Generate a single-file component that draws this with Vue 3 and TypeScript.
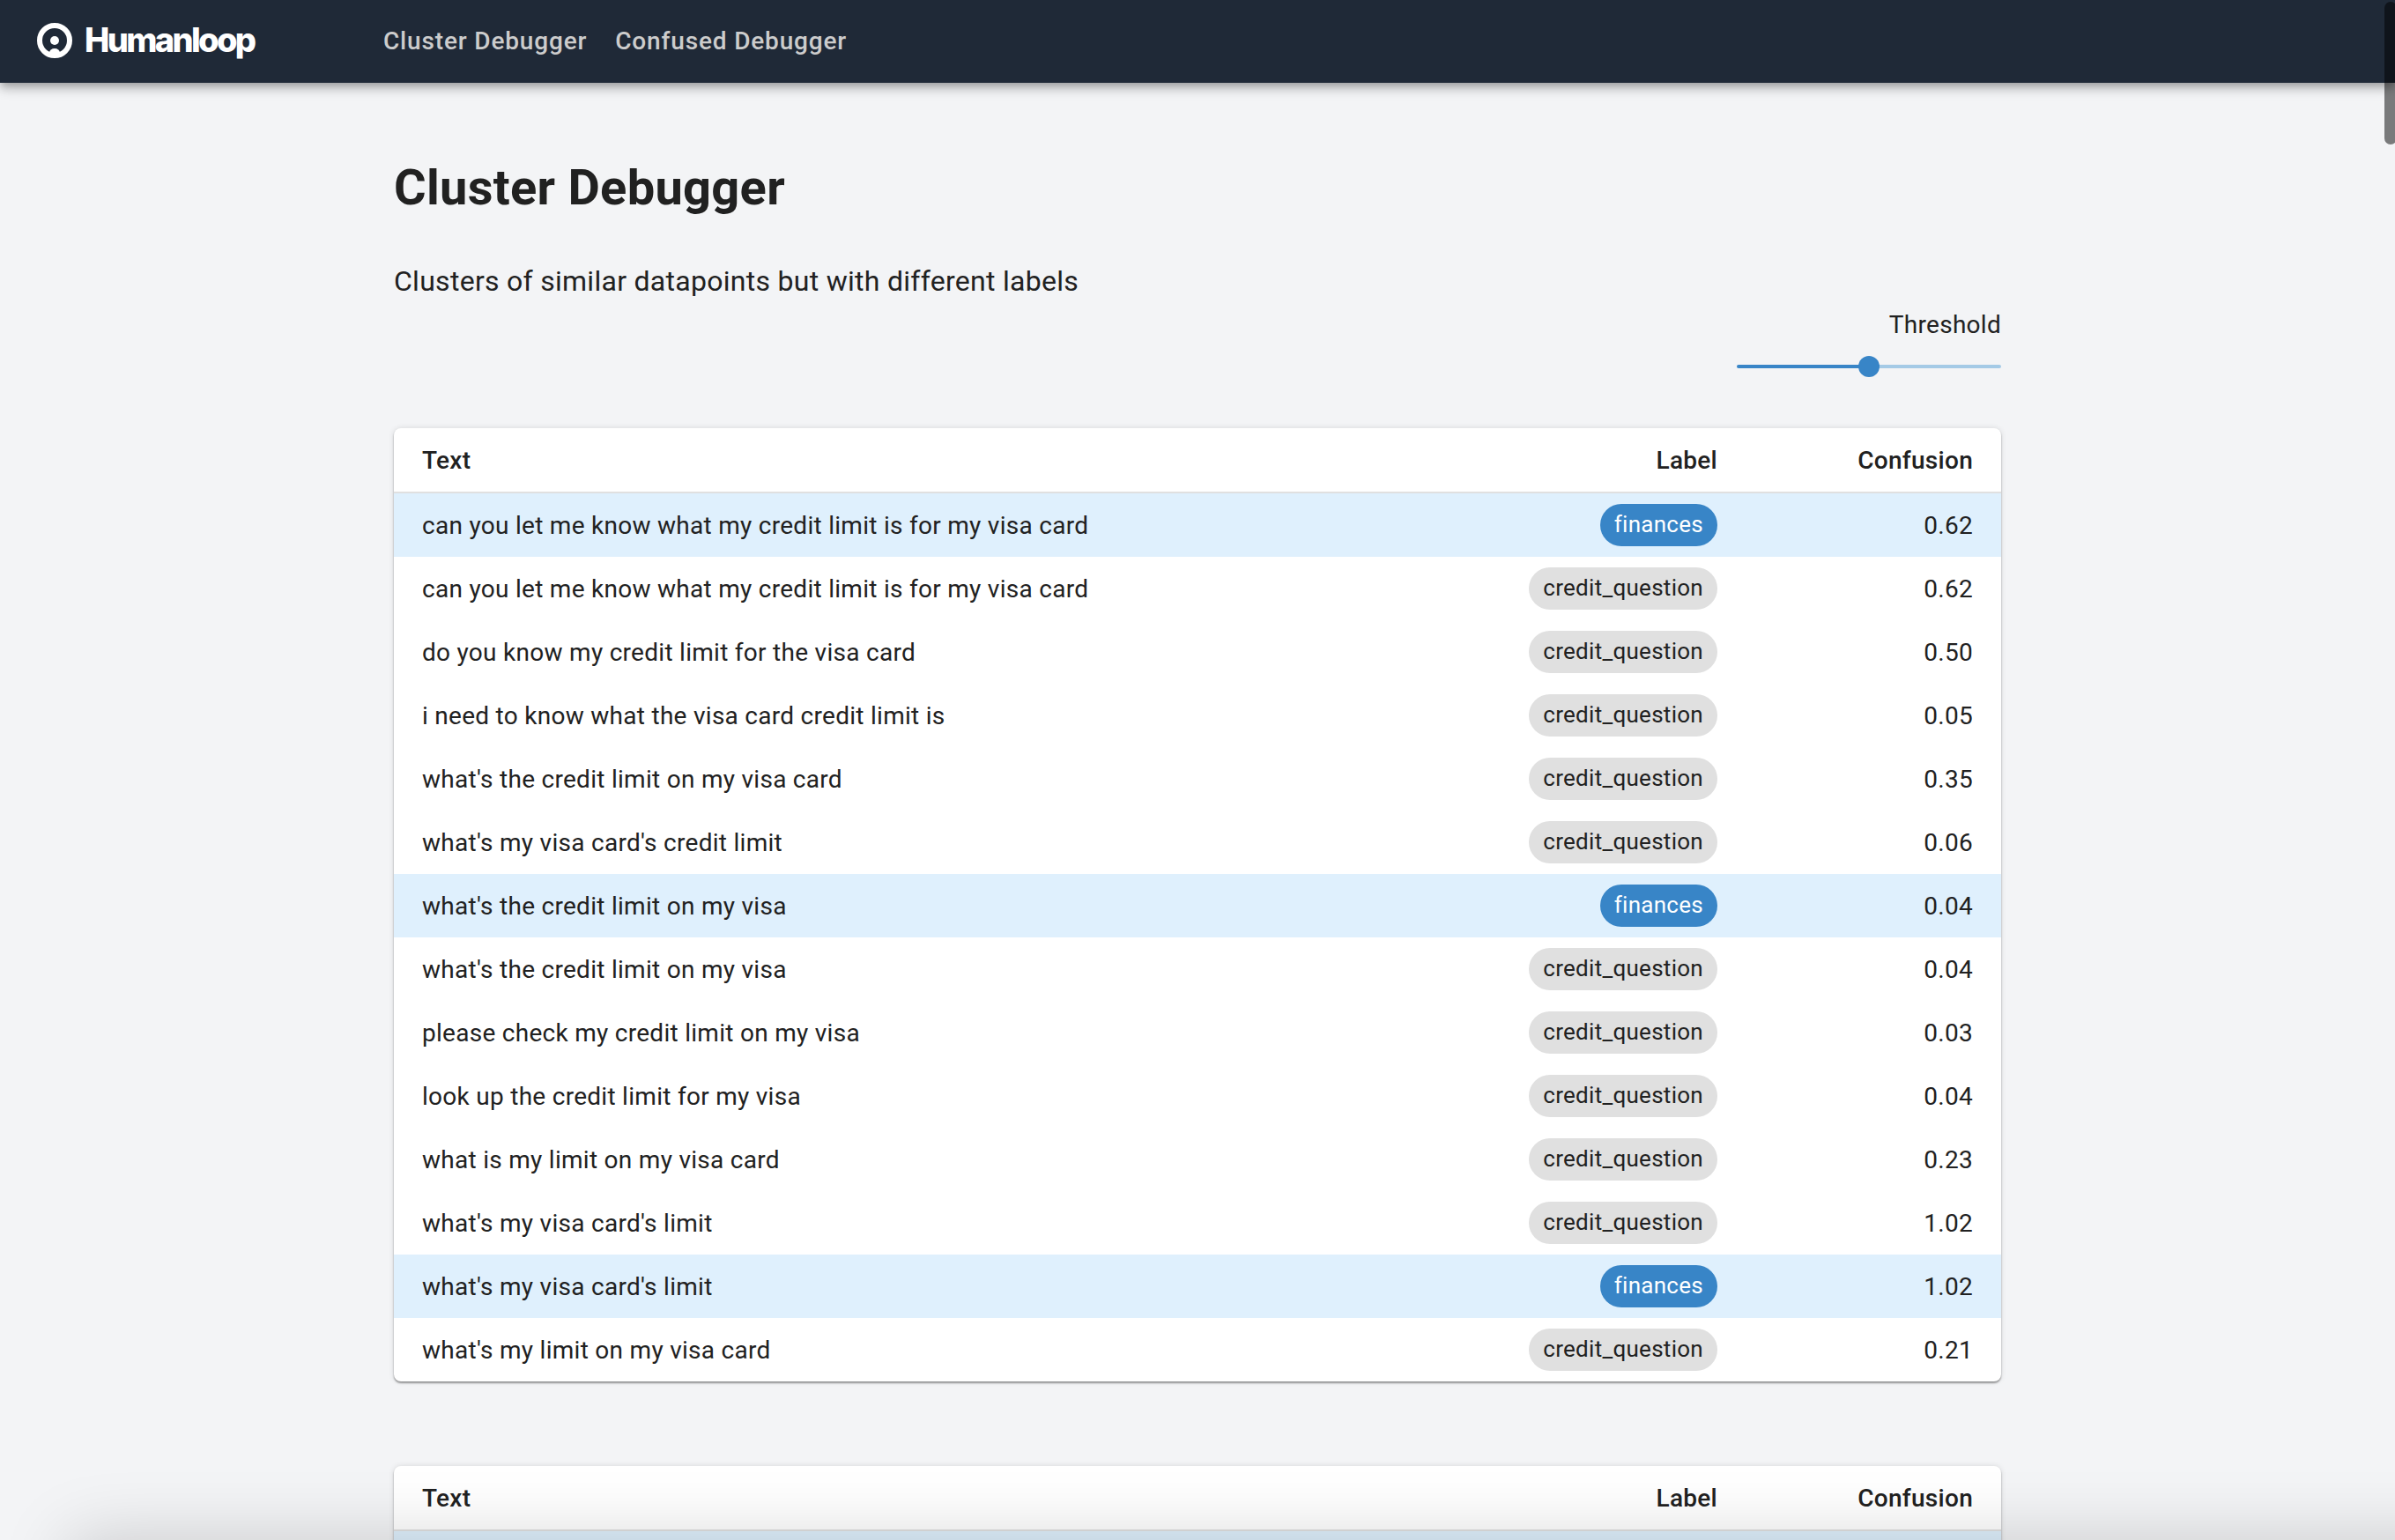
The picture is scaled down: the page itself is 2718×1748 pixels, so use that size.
<script setup lang="ts">
import { ref } from 'vue'

interface Datapoint {
  text: string
  label: string
  confusion: string
}

const threshold = ref(50)

const row = (text: string, confusion: string, label = 'credit_question'): Datapoint => ({ text, label, confusion })

const clusters: Datapoint[][] = [
  [
    row('can you let me know what my credit limit is for my visa card', '0.62', 'finances'),
    row('can you let me know what my credit limit is for my visa card', '0.62'),
    row('do you know my credit limit for the visa card', '0.50'),
    row('i need to know what the visa card credit limit is', '0.05'),
    row("what's the credit limit on my visa card", '0.35'),
    row("what's my visa card's credit limit", '0.06'),
    row("what's the credit limit on my visa", '0.04', 'finances'),
    row("what's the credit limit on my visa", '0.04'),
    row('please check my credit limit on my visa', '0.03'),
    row('look up the credit limit for my visa', '0.04'),
    row('what is my limit on my visa card', '0.23'),
    row("what's my visa card's limit", '1.02'),
    row("what's my visa card's limit", '1.02', 'finances'),
    row("what's my limit on my visa card", '0.21'),
  ],
  [row('', '', 'finances')],
]
</script>

<template>
  <div class="page">
    <header class="bar">
      <a class="brand" href="#">
        <svg class="mark" viewBox="0 0 40 40" aria-hidden="true">
          <circle cx="20" cy="20" r="17" fill="none" stroke="#fff" stroke-width="6" />
          <circle cx="20" cy="20" r="5" fill="#fff" />
          <path d="M14 37v-3a6 5 0 0 1 12 0v3z" fill="#fff" />
        </svg>
        <span class="name">Humanloop</span>
      </a>
      <nav class="links">
        <a href="#cluster">Cluster Debugger</a>
        <a href="#confused">Confused Debugger</a>
      </nav>
    </header>

    <main class="content">
      <h1>Cluster Debugger</h1>
      <p class="lead">Clusters of similar datapoints but with different labels</p>
      <div class="control">
        <label for="threshold">Threshold</label>
        <input id="threshold" v-model.number="threshold" type="range" min="0" max="100"
          :style="{ '--fill': threshold + '%' }" />
      </div>

      <section v-for="(cluster, c) in clusters" :key="c" class="card">
        <table>
          <thead>
            <tr>
              <th class="text">Text</th>
              <th class="label">Label</th>
              <th class="score">Confusion</th>
            </tr>
          </thead>
          <tbody>
            <tr v-for="(point, i) in cluster" :key="i" :class="{ odd: point.label === 'finances' }">
              <td class="text">{{ point.text }}</td>
              <td class="label"><span v-if="point.text" class="chip">{{ point.label }}</span></td>
              <td class="score">{{ point.confusion }}</td>
            </tr>
          </tbody>
        </table>
      </section>
    </main>

    <div class="scroll-thumb"></div>
    <div class="bottom-shade"></div>
  </div>
</template>

<style>
html,
body {
  margin: 0;
  overflow: hidden;
}
</style>

<style scoped>
.page {
  position: relative;
  height: 100vh;
  overflow: hidden;
  background: #f3f4f6;
  color: #212121;
  font: 400 28px/40px Roboto, sans-serif;
  letter-spacing: 0.01em;
}

.bar {
  display: flex;
  align-items: center;
  height: 94px;
  padding: 0 42px;
  box-sizing: border-box;
  background: #1f2937;
  box-shadow: 0 4px 8px -2px rgba(0, 0, 0, 0.2), 0 8px 10px rgba(0, 0, 0, 0.14), 0 2px 20px rgba(0, 0, 0, 0.12);
}

.brand {
  display: flex;
  align-items: center;
  gap: 14px;
  width: 393px;
  padding-bottom: 2px;
  color: #fff;
  text-decoration: none;
}

.mark {
  width: 40px;
  height: 40px;
}

.name {
  padding-bottom: 2px;
  font: 800 38px/40px Inter, sans-serif;
  letter-spacing: -0.07em;
}

.links {
  display: flex;
  gap: 32px;
  letter-spacing: 0.03em;
}

.links a {
  color: #cccccc;
  font-weight: 500;
  text-decoration: none;
}

.content {
  max-width: 1824px;
  margin: 0 auto;
  padding-top: 79px;
}

h1 {
  margin: 0;
  font-size: 56px;
  line-height: 80px;
  font-weight: 700;
  letter-spacing: 0.005em;
}

.lead {
  margin: 42px 0 0;
  font-size: 32px;
  line-height: 48px;
}

.control {
  display: flex;
  flex-direction: column;
  align-items: flex-end;
  margin: 6px 0 56px;
}

input[type='range'] {
  appearance: none;
  width: 300px;
  height: 24px;
  margin: 15px 0 2px;
  background: transparent;
}

input[type='range']::-webkit-slider-runnable-track {
  height: 4px;
  border-radius: 2px;
  background: linear-gradient(to right, #3885c7 var(--fill), #a4cae6 var(--fill));
}

input[type='range']::-webkit-slider-thumb {
  appearance: none;
  width: 24px;
  height: 24px;
  margin-top: -10px;
  border-radius: 50%;
  background: #3885c7;
}

.card {
  margin-bottom: 96px;
  border-radius: 8px;
  overflow: hidden;
  background: #fff;
  box-shadow: 0 2px 2px rgba(0, 0, 0, 0.36), 0 0 6px rgba(0, 0, 0, 0.12);
}

table {
  width: 100%;
  border-collapse: separate;
  border-spacing: 0;
  table-layout: fixed;
}

th,
td {
  height: 70px;
  padding: 2px 32px 0;
  text-align: right;
}

td.label {
  height: 72px;
  padding-top: 0;
}

th {
  border-bottom: 2px solid #e0e0e0;
  font-weight: 500;
}

.text {
  text-align: left;
}

th.label {
  width: 400px;
}

th.score {
  width: 226px;
}

.odd {
  background: #dff0fd;
}

.chip {
  display: inline-block;
  padding: 0 16px 2px;
  border-radius: 24px;
  background: #e0e0e0;
  font-size: 26px;
  line-height: 46px;
  vertical-align: middle;
}

.odd .chip {
  background: #3885c7;
  color: #fff;
}

.scroll-thumb {
  position: absolute;
  top: 2px;
  right: -2px;
  width: 14px;
  height: 162px;
  border-radius: 7px;
  background: rgba(0, 0, 0, 0.5);
}

.bottom-shade {
  position: absolute;
  top: 100%;
  right: -100px;
  left: 80px;
  height: 200px;
  box-shadow: 0 0 80px rgba(0, 0, 0, 0.18);
}
</style>
